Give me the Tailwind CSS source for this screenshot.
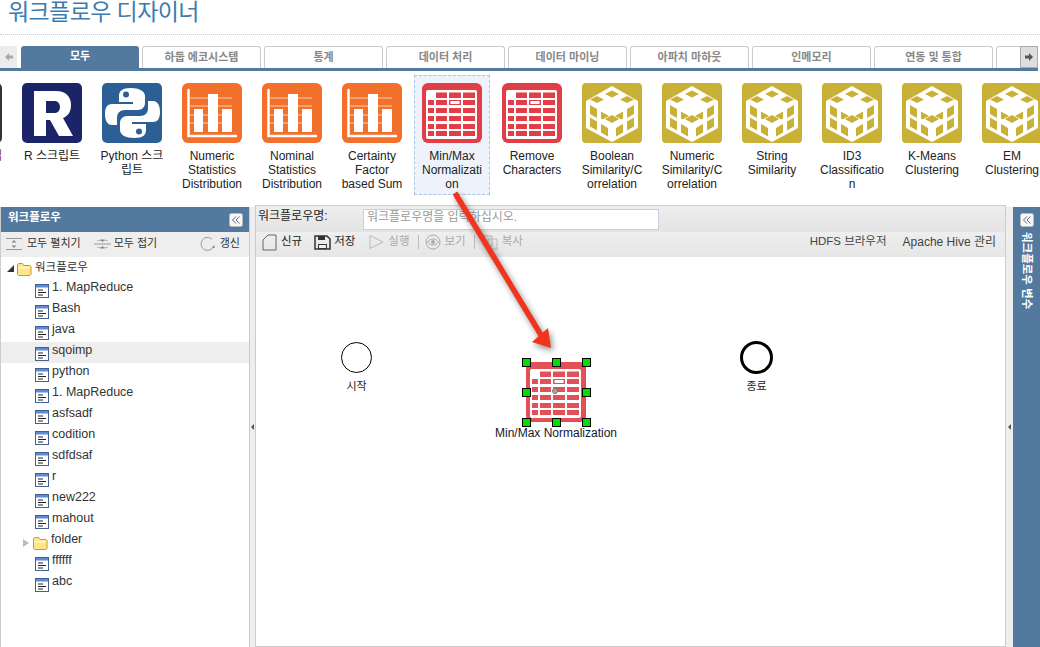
<!DOCTYPE html>
<html lang="ko">
<head>
  <meta charset="UTF-8" />
  <title>워크플로우 디자이너</title>
  <script src="https://cdn.jsdelivr.net/npm/@tailwindcss/browser@4"></script>
</head>
<body class="bg-white font-['Liberation_Sans','Noto_Sans_CJK_KR',sans-serif] text-[12px] text-[#222]">

<!-- icon definitions -->
<svg class="hidden" width="0" height="0">
  <defs>
    <symbol id="ic-r" viewBox="0 0 60 60">
      <rect width="60" height="60" rx="5" fill="#1b2466"/>
      <path fill-rule="evenodd" fill="#fff" d="M12 8h22c10 0 15 6 15 14 0 7-3 11-8 13l10 18H37l-9-16h-4v16H12zM24 18v12h9c3 0 5-3 5-6s-2-6-5-6z"/>
    </symbol>
    <symbol id="ic-py" viewBox="0 0 60 60">
      <rect width="60" height="60" rx="5" fill="#2c5f95"/>
      <path fill="#fff" d="M29 5c-9 0-12 3-12 8v6h14v2H10c-5 0-7 4-7 10s2 11 7 11h5v-7c0-5 3-8 8-8h13c4 0 7-3 7-7V13c0-5-6-8-14-8z"/>
      <path fill="#fff" transform="rotate(180 30.5 30)" d="M29 5c-9 0-12 3-12 8v6h14v2H10c-5 0-7 4-7 10s2 11 7 11h5v-7c0-5 3-8 8-8h13c4 0 7-3 7-7V13c0-5-6-8-14-8z"/>
      <circle cx="24" cy="11.500" r="3" fill="#2c5f95"/>
      <circle cx="37" cy="48.500" r="3" fill="#2c5f95"/>
    </symbol>
    <symbol id="ic-bar" viewBox="0 0 60 60">
      <rect width="60" height="60" rx="6" fill="#f2702b"/>
      <path d="M8 15h42M8 23h42M8 32h42M8 40h42" stroke="#fff" stroke-opacity=".45" stroke-width="1.500"/>
      <path d="M12 26h9v23h-9zM26 11h10v38H26zM40 26h10v23H40z" fill="#fff"/>
      <path d="M6.500 7v46H54" fill="none" stroke="#fff" stroke-width="2.500" stroke-linecap="round"/>
    </symbol>
    <symbol id="ic-table" viewBox="0 0 60 60">
      <rect width="60" height="60" rx="6" fill="#e23e47"/>
      <rect x="4" y="7" width="51" height="49" rx="2" fill="#fff"/>
      <g fill="#e23e47">
        <path d="M14 9.500h11v5.500H14zM27 9.500h12v5.500H27zM41 9.500h12v5.500H41z"/>
        <path d="M6 17h6v5H6zM14 17h11v5H14zM27 17h12v5H27zM41 17h12v5H41z"/>
        <path d="M6 25h6v5H6zM14 25h11v5H14zM27 25h12v5H27zM41 25h12v5H41z"/>
        <path d="M6 33h6v5H6zM14 33h11v5H14zM27 33h12v5H27zM41 33h12v5H41z"/>
        <path d="M6 41h6v5H6zM14 41h11v5H14zM27 41h12v5H27zM41 41h12v5H41z"/>
        <path d="M6 48h6v5H6zM14 48h11v5H14zM27 48h12v5H27zM41 48h12v5H41z"/>
      </g>
      <rect x="28.500" y="18" width="9" height="3" fill="#fff"/>
    </symbol>
    <symbol id="ic-cube" viewBox="0 0 60 60">
      <rect width="60" height="60" rx="4" fill="#c9b037"/>
      <path d="M30 3l26 15v27L30 59 4 45V18z" fill="#fff"/>
      <g fill="#c9b037">
        <path d="M30 7.500l7 3.500-7 3.500-7-3.500zM15 13l7 3.500-7 3.500-7-3.500zM45 13l7 3.500-7 3.500-7-3.500zM30 32l7 4-7 4-7-4z"/>
        <path d="M8 22l7 4v9l-7-4zM19 28.500l8 4.500-6.500 3.500-1.500-1zM8 34.500l7 4v9l-7-4zM19 41l7 4v8.500l-7-4z"/>
        <path d="M52 22l-7 4v9l7-4zM41 28.500l-8 4.500 6.500 3.500 1.500-1zM52 34.500l-7 4v9l7-4zM41 41l-7 4v8.500l7-4z"/>
      </g>
    </symbol>
    <symbol id="ic-doc" viewBox="0 0 14 14">
      <rect x=".5" y=".5" width="13" height="13" fill="#fff" stroke="#43608f"/>
      <rect x="1" y="1" width="12" height="2.500" fill="#5c8bdc"/>
      <path d="M3 6h5M3 8.500h8M3 11h5" stroke="#222" stroke-width="1"/>
    </symbol>
    <symbol id="ic-folder" viewBox="0 0 16 14">
      <path d="M1.500 12.500V2.500l1-1h4l1.500 2h6l1 1v8l-1 1h-11.500z" fill="#fde58a" stroke="#c49a35"/>
      <path d="M2 5h12v1.500H2z" fill="#fff6cf"/>
    </symbol>
    <symbol id="ic-collapse" viewBox="0 0 14 14">
      <rect x=".5" y=".5" width="13" height="13" rx="2" fill="#f6f6f6" stroke="#bbb"/>
      <path d="M7 3.500L3.500 7 7 10.500M10.500 3.500L7 7l3.500 3.500" fill="none" stroke="#667" stroke-width="1"/>
    </symbol>
  </defs>
</svg>

<div class="relative w-[1040px] h-[647px] overflow-hidden flex flex-col">

  <!-- title -->
  <div class="h-[35px] shrink-0 border-b border-dotted border-[#c8c8c8] pl-2">
    <h1 class="text-[23px] tracking-[-0.6px] leading-[25px] text-[#3c7bb0]">워크플로우 디자이너</h1>
  </div>

  <!-- tabs -->
  <div class="relative h-[25px] mt-[11px] mr-0.5 shrink-0 overflow-hidden border-b-[3px] border-[#54799f] pl-[21px] flex gap-[3px] text-[11px] font-bold text-[#888] text-center leading-[20px]">
    <div class="w-[118px] shrink-0 h-[23px] rounded-t-[3px] bg-[#54799f] text-white">모두</div>
    <div class="w-[119px] shrink-0 h-[23px] rounded-t-[3px] border border-b-0 border-[#ccc]">하둡 에코시스템</div>
    <div class="w-[119px] shrink-0 h-[23px] rounded-t-[3px] border border-b-0 border-[#ccc]">통계</div>
    <div class="w-[119px] shrink-0 h-[23px] rounded-t-[3px] border border-b-0 border-[#ccc]">데이터 처리</div>
    <div class="w-[119px] shrink-0 h-[23px] rounded-t-[3px] border border-b-0 border-[#ccc]">데이터 마이닝</div>
    <div class="w-[119px] shrink-0 h-[23px] rounded-t-[3px] border border-b-0 border-[#ccc]">아파치 마하웃</div>
    <div class="w-[119px] shrink-0 h-[23px] rounded-t-[3px] border border-b-0 border-[#ccc]">인메모리</div>
    <div class="w-[119px] shrink-0 h-[23px] rounded-t-[3px] border border-b-0 border-[#ccc]">연동 및 통합</div>
    <div class="w-[119px] shrink-0 h-[23px] rounded-t-[3px] border border-b-0 border-[#ccc]"></div>
    <div class="absolute left-0 top-0 w-[17px] h-[22px] bg-[#ececec] flex items-center justify-center">
      <svg width="10" height="10" viewBox="0 0 10 10"><path d="M5 1L1 5l4 4V6.500h4v-3H5z" fill="#aaa"/></svg>
    </div>
    <div class="absolute right-0 top-0 w-[18px] h-[22px] bg-[#dedede] border border-[#aaa] flex items-center justify-center">
      <svg width="10" height="10" viewBox="0 0 10 10"><path d="M5 1l4 4-4 4V6.500H1v-3h4z" fill="#555"/></svg>
    </div>
  </div>

  <!-- module strip -->
  <div class="h-[136px] shrink-0 overflow-hidden pt-[4px]">
    <div class="flex -ml-[68px] leading-[14px] text-center [overflow-wrap:anywhere]">
      <div class="w-[80px] shrink-0 px-[2px]"><div class="w-[76px] h-[120px] pt-[8px] px-[5px]"><div class="mx-auto w-[60px] h-[60px] rounded-[5px] bg-[#333]"></div><p class="mt-[6px] text-[#8a2a10]">Hive 스크립트</p></div></div>
      <div class="w-[80px] shrink-0 px-[2px]"><div class="w-[76px] h-[120px] pt-[8px] px-[5px]"><svg class="mx-auto" width="60" height="60"><use href="#ic-r"/></svg><p class="mt-[6px]">R 스크립트</p></div></div>
      <div class="w-[80px] shrink-0 px-[2px]"><div class="w-[76px] h-[120px] pt-[8px] px-[5px]"><svg class="mx-auto" width="60" height="60"><use href="#ic-py"/></svg><p class="mt-[6px]">Python 스크립트</p></div></div>
      <div class="w-[80px] shrink-0 px-[2px]"><div class="w-[76px] h-[120px] pt-[8px] px-[5px]"><svg class="mx-auto" width="60" height="60"><use href="#ic-bar"/></svg><p class="mt-[6px]">Numeric Statistics Distribution</p></div></div>
      <div class="w-[80px] shrink-0 px-[2px]"><div class="w-[76px] h-[120px] pt-[8px] px-[5px]"><svg class="mx-auto" width="60" height="60"><use href="#ic-bar"/></svg><p class="mt-[6px]">Nominal Statistics Distribution</p></div></div>
      <div class="w-[80px] shrink-0 px-[2px]"><div class="w-[76px] h-[120px] pt-[8px] px-[5px]"><svg class="mx-auto" width="60" height="60"><use href="#ic-bar"/></svg><p class="mt-[6px]">Certainty Factor based Sum</p></div></div>
      <div class="w-[80px] shrink-0 px-[2px]"><div class="w-[76px] h-[120px] pt-[7px] px-[4px] border border-dashed border-[#a9c4e4] bg-[#eef3fb]"><svg class="mx-auto" width="60" height="60"><use href="#ic-table"/></svg><p class="mt-[6px]">Min/Max Normalization</p></div></div>
      <div class="w-[80px] shrink-0 px-[2px]"><div class="w-[76px] h-[120px] pt-[8px] px-[5px]"><svg class="mx-auto" width="60" height="60"><use href="#ic-table"/></svg><p class="mt-[6px]">Remove Characters</p></div></div>
      <div class="w-[80px] shrink-0 px-[2px]"><div class="w-[76px] h-[120px] pt-[8px] px-[5px]"><svg class="mx-auto" width="60" height="60"><use href="#ic-cube"/></svg><p class="mt-[6px]">Boolean Similarity/Correlation</p></div></div>
      <div class="w-[80px] shrink-0 px-[2px]"><div class="w-[76px] h-[120px] pt-[8px] px-[5px]"><svg class="mx-auto" width="60" height="60"><use href="#ic-cube"/></svg><p class="mt-[6px]">Numeric Similarity/Correlation</p></div></div>
      <div class="w-[80px] shrink-0 px-[2px]"><div class="w-[76px] h-[120px] pt-[8px] px-[5px]"><svg class="mx-auto" width="60" height="60"><use href="#ic-cube"/></svg><p class="mt-[6px]">String Similarity</p></div></div>
      <div class="w-[80px] shrink-0 px-[2px]"><div class="w-[76px] h-[120px] pt-[8px] px-[5px]"><svg class="mx-auto" width="60" height="60"><use href="#ic-cube"/></svg><p class="mt-[6px]">ID3 Classification</p></div></div>
      <div class="w-[80px] shrink-0 px-[2px]"><div class="w-[76px] h-[120px] pt-[8px] px-[5px]"><svg class="mx-auto" width="60" height="60"><use href="#ic-cube"/></svg><p class="mt-[6px]">K-Means Clustering</p></div></div>
      <div class="w-[80px] shrink-0 px-[2px]"><div class="w-[76px] h-[120px] pt-[8px] px-[5px]"><svg class="mx-auto" width="60" height="60"><use href="#ic-cube"/></svg><p class="mt-[6px]">EM Clustering</p></div></div>
    </div>
  </div>

  <!-- workspace -->
  <div class="flex-1 min-h-0 flex">

    <!-- left panel -->
    <aside class="w-[250px] shrink-0 border-l border-r border-[#ccc] flex flex-col">
      <div class="h-[25px] bg-[#54799f] text-white text-[11.5px] font-bold pl-[7px] pb-[3px] flex items-center justify-between pr-[6px]">
        <span>워크플로우</span>
        <svg width="14" height="14" class="mt-[3px]"><use href="#ic-collapse"/></svg>
      </div>
      <div class="h-[25px] bg-[#eeeeee] flex items-center pl-[5px] pr-[9px] pb-[2px] text-[11px] text-[#333]">
        <svg width="17" height="14" viewBox="0 0 17 14" class="mr-[4px]"><path d="M0 1.500h16M0 12.500h16" stroke="#999"/><path d="M8 3l-2.500 2.500h5zM8 11L5.500 8.500h5z" fill="#888"/></svg>
        <span>모두 펼치기</span>
        <svg width="17" height="14" viewBox="0 0 17 14" class="ml-[13px] mr-[3px]"><path d="M0 7h17" stroke="#999"/><path d="M3 3.500h11M3 10.500h11" stroke="#bbb"/><path d="M8.500 5L6 2.500h5zM8.500 9L6 11.500h5z" fill="#888"/></svg>
        <span>모두 접기</span>
        <svg width="16" height="16" viewBox="0 0 16 16" class="ml-auto mr-[4px]"><path d="M13.500 10.500A6.500 6.500 0 1 1 12 3.200" fill="none" stroke="#999"/><path d="M14 9l-2 2.500 3 .5z" fill="#888"/></svg>
        <span>갱신</span>
      </div>
      <ul class="pt-[1px] text-[#333] leading-[21px] text-[12.5px]">
        <li class="h-[21px] flex items-center pl-[6px] text-[11.5px]">
          <span class="w-0 h-0 mr-[2px] border-l-[7px] border-l-transparent border-b-[7px] border-b-[#333]"></span>
          <svg width="16" height="14" class="mr-[3px]"><use href="#ic-folder"/></svg><span class="-mt-[2px]">워크플로우</span>
        </li>
        <li class="h-[21px] flex items-center pl-[34px] gap-[3px]"><svg width="14" height="14" class="mt-[3px]"><use href="#ic-doc"/></svg><span class="-mt-[4px]">1. MapReduce</span></li>
        <li class="h-[21px] flex items-center pl-[34px] gap-[3px]"><svg width="14" height="14" class="mt-[3px]"><use href="#ic-doc"/></svg><span class="-mt-[4px]">Bash</span></li>
        <li class="h-[21px] flex items-center pl-[34px] gap-[3px]"><svg width="14" height="14" class="mt-[3px]"><use href="#ic-doc"/></svg><span class="-mt-[4px]">java</span></li>
        <li class="h-[21px] flex items-center pl-[34px] gap-[3px] bg-[#eeeeee]"><svg width="14" height="14" class="mt-[3px]"><use href="#ic-doc"/></svg><span class="-mt-[4px]">sqoimp</span></li>
        <li class="h-[21px] flex items-center pl-[34px] gap-[3px]"><svg width="14" height="14" class="mt-[3px]"><use href="#ic-doc"/></svg><span class="-mt-[4px]">python</span></li>
        <li class="h-[21px] flex items-center pl-[34px] gap-[3px]"><svg width="14" height="14" class="mt-[3px]"><use href="#ic-doc"/></svg><span class="-mt-[4px]">1. MapReduce</span></li>
        <li class="h-[21px] flex items-center pl-[34px] gap-[3px]"><svg width="14" height="14" class="mt-[3px]"><use href="#ic-doc"/></svg><span class="-mt-[4px]">asfsadf</span></li>
        <li class="h-[21px] flex items-center pl-[34px] gap-[3px]"><svg width="14" height="14" class="mt-[3px]"><use href="#ic-doc"/></svg><span class="-mt-[4px]">codition</span></li>
        <li class="h-[21px] flex items-center pl-[34px] gap-[3px]"><svg width="14" height="14" class="mt-[3px]"><use href="#ic-doc"/></svg><span class="-mt-[4px]">sdfdsaf</span></li>
        <li class="h-[21px] flex items-center pl-[34px] gap-[3px]"><svg width="14" height="14" class="mt-[3px]"><use href="#ic-doc"/></svg><span class="-mt-[4px]">r</span></li>
        <li class="h-[21px] flex items-center pl-[34px] gap-[3px]"><svg width="14" height="14" class="mt-[3px]"><use href="#ic-doc"/></svg><span class="-mt-[4px]">new222</span></li>
        <li class="h-[21px] flex items-center pl-[34px] gap-[3px]"><svg width="14" height="14" class="mt-[3px]"><use href="#ic-doc"/></svg><span class="-mt-[4px]">mahout</span></li>
        <li class="h-[21px] flex items-center pl-[22px] gap-[3px]">
          <span class="w-0 h-0 mt-[3px] border-y-[4px] border-y-transparent border-l-[6px] border-l-[#bbb]"></span>
          <svg width="16" height="14" class="mt-[3px]"><use href="#ic-folder"/></svg><span class="-mt-[4px]">folder</span></li>
        <li class="h-[21px] flex items-center pl-[34px] gap-[3px]"><svg width="14" height="14" class="mt-[3px]"><use href="#ic-doc"/></svg><span class="-mt-[4px]">ffffff</span></li>
        <li class="h-[21px] flex items-center pl-[34px] gap-[3px]"><svg width="14" height="14" class="mt-[3px]"><use href="#ic-doc"/></svg><span class="-mt-[4px]">abc</span></li>
      </ul>
    </aside>

    <!-- left splitter -->
    <div class="w-[5px] shrink-0 bg-[#eeeeee] flex items-center justify-center">
      <span class="w-0 h-0 border-y-[3px] border-y-transparent border-r-[3px] border-r-[#555]"></span>
    </div>

    <!-- main panel -->
    <main class="w-[751px] shrink-0 -mt-[2px] border border-[#ccc] flex flex-col">
      <div class="h-[26px] bg-gradient-to-b from-[#eeeeee] to-[#e4e4e4] flex items-center pl-[2px]">
        <label class="w-[105px] mb-[6px]">워크플로우명:</label>
        <input type="text" placeholder="워크플로우명을 입력하십시오." class="w-[296px] h-[21px] border border-[#c3cfe0] bg-white pl-[3px] pb-[4px] text-[12px] placeholder:text-[#999]" />
      </div>
      <div class="h-[25px] bg-gradient-to-b from-[#eeeeee] to-[#e6e6e6] flex items-center pl-[6px] pr-[9px] pb-[5px] text-[11.5px] text-[#222]">
        <svg width="15" height="17" viewBox="0 0 15 17" class="mr-[4px]"><path d="M1 6l5-5h8v15H1z" fill="none" stroke="#666"/></svg>
        <span>신규</span>
        <svg width="17" height="15" viewBox="0 0 17 15" class="ml-[12px] mr-[3px]"><path d="M1 1h12l3 3v10H1z" fill="none" stroke="#333" stroke-width="1.500"/><path d="M4 1h7v4H4zM4 9h9v5H4z" fill="#333"/><path d="M5 10h7v3H5z" fill="#eee"/></svg>
        <span>저장</span>
        <svg width="15" height="16" viewBox="0 0 15 16" class="ml-[14px] mr-[4px]"><path d="M1 1.500l13 6.500-13 6.500z" fill="none" stroke="#bbb"/></svg>
        <span class="text-[#aaa]">실행</span>
        <span class="w-px h-[14px] bg-[#bbb] ml-[8px] mr-[6px]"></span>
        <svg width="16" height="16" viewBox="0 0 16 16" class="mr-[4px]"><circle cx="8" cy="8" r="7" fill="none" stroke="#aaa"/><path d="M2.500 8c3-4 8-4 11 0-3 4-8 4-11 0z" fill="none" stroke="#aaa"/><circle cx="8" cy="8" r="2" fill="#aaa"/></svg>
        <span class="text-[#aaa]">보기</span>
        <span class="w-px h-[14px] bg-[#bbb] ml-[8px] mr-[8px]"></span>
        <svg width="15" height="15" viewBox="0 0 15 15" class="mr-[4px]"><path d="M1 1h8v10H1zM5 4h9v10H5z" fill="none" stroke="#bbb"/></svg>
        <span class="text-[#aaa]">복사</span>
        <span class="ml-auto text-[#444]">HDFS 브라우저</span>
        <span class="ml-[16px] text-[#444] text-[12px]">Apache Hive 관리</span>
      </div>

      <!-- canvas -->
      <div class="relative flex-1 bg-white">
        <div class="absolute left-[85px] top-[85px] w-[31px] h-[31px] rounded-full border border-black bg-white"></div>
        <span class="absolute left-[85px] top-[121px] w-[31px] text-center text-[11px]">시작</span>
        <div class="absolute left-[484px] top-[84px] w-[33px] h-[33px] rounded-full border-[3px] border-black bg-white"></div>
        <span class="absolute left-[484px] top-[121px] w-[33px] text-center text-[11px]">종료</span>

        <!-- selected node -->
        <div class="absolute left-[270px] top-[105px] w-[60px] h-[60px] border-r border-b border-dashed border-[#00e000]">
          <svg width="60" height="60" class="opacity-90"><use href="#ic-table"/></svg>
          <span class="absolute left-[26px] top-[26px] w-[6px] h-[6px] rounded-full bg-[#aaa] border border-[#777]"></span>
          <span class="absolute -left-[4px] -top-[4px] w-[9px] h-[9px] bg-[#00e000] border border-black"></span>
          <span class="absolute left-[26px] -top-[4px] w-[9px] h-[9px] bg-[#00e000] border border-black"></span>
          <span class="absolute left-[56px] -top-[4px] w-[9px] h-[9px] bg-[#00e000] border border-black"></span>
          <span class="absolute -left-[4px] top-[26px] w-[9px] h-[9px] bg-[#00e000] border border-black"></span>
          <span class="absolute left-[56px] top-[26px] w-[9px] h-[9px] bg-[#00e000] border border-black"></span>
          <span class="absolute -left-[4px] top-[56px] w-[9px] h-[9px] bg-[#00e000] border border-black"></span>
          <span class="absolute left-[26px] top-[56px] w-[9px] h-[9px] bg-[#00e000] border border-black"></span>
          <span class="absolute left-[56px] top-[56px] w-[9px] h-[9px] bg-[#00e000] border border-black"></span>
        </div>
        <span class="absolute left-[220px] top-[167px] w-[160px] text-center text-[#111a33]">Min/Max Normalization</span>
      </div>
    </main>

    <!-- right splitter -->
    <div class="w-[7px] shrink-0 bg-[#eeeeee] flex items-center justify-center">
      <span class="w-0 h-0 border-y-[3px] border-y-transparent border-r-[3px] border-r-[#555]"></span>
    </div>

    <!-- right collapsed panel -->
    <aside class="flex-1 bg-[#54799f] flex flex-col items-center pt-[6px]">
      <svg width="14" height="14"><use href="#ic-collapse"/></svg>
      <span class="mt-[5px] [writing-mode:vertical-rl] [text-orientation:sideways] text-white text-[11.5px] font-bold leading-none">워크플로우 변수</span>
    </aside>
  </div>

  <!-- red annotation arrow -->
  <svg class="absolute left-0 top-0 pointer-events-none drop-shadow-[2px_3px_3px_rgba(0,0,0,0.45)]" width="1040" height="647" viewBox="0 0 1040 647">
    <path d="M455 193L541 335" stroke="#f0341e" stroke-width="5.5" fill="none"/>
    <path d="M551 348L532 342 548 328z" fill="#f0341e"/>
  </svg>
</div>
</body>
</html>
